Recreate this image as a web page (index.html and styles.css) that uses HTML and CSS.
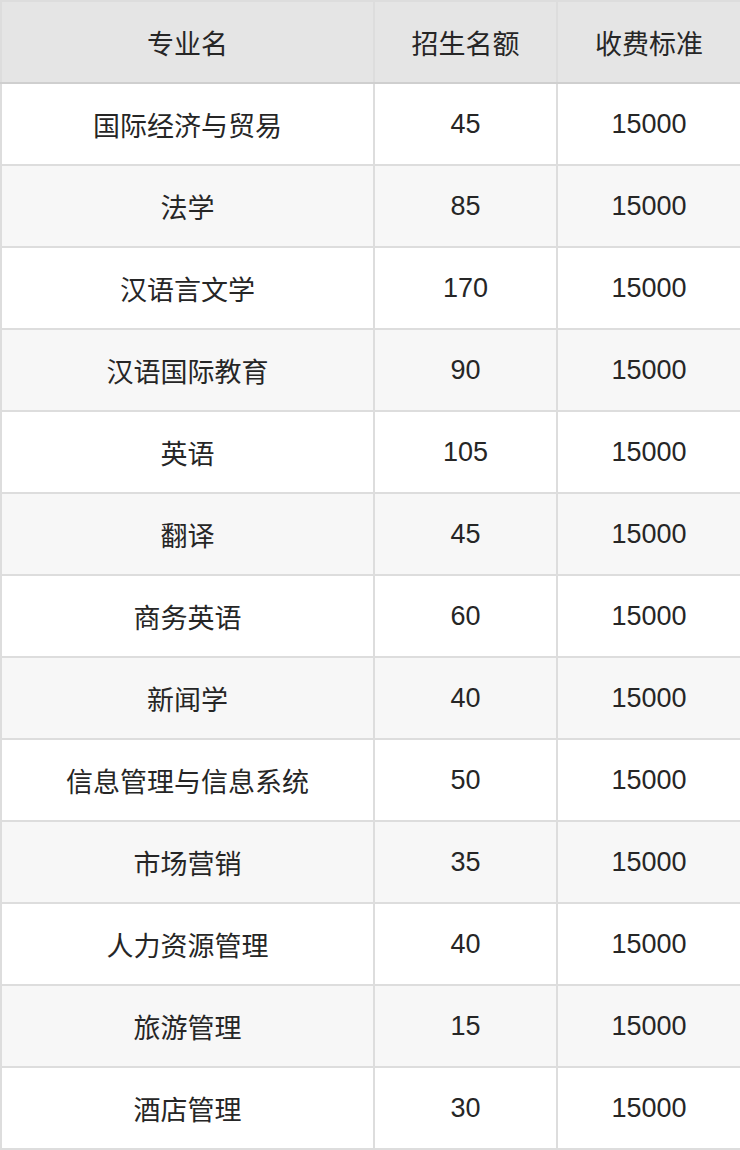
FILE: index.html
```html
<!DOCTYPE html>
<html lang="zh">
<head>
<meta charset="utf-8">
<link rel="stylesheet" href="styles.css">
</head>
<body>
<table class="grid">
  <colgroup><col class="c1"><col class="c2"><col class="c3"></colgroup>
  <thead>
    <tr><th>专业名</th><th>招生名额</th><th>收费标准</th></tr>
  </thead>
  <tbody>
    <tr><td>国际经济与贸易</td><td>45</td><td>15000</td></tr>
    <tr><td>法学</td><td>85</td><td>15000</td></tr>
    <tr><td>汉语言文学</td><td>170</td><td>15000</td></tr>
    <tr><td>汉语国际教育</td><td>90</td><td>15000</td></tr>
    <tr><td>英语</td><td>105</td><td>15000</td></tr>
    <tr><td>翻译</td><td>45</td><td>15000</td></tr>
    <tr><td>商务英语</td><td>60</td><td>15000</td></tr>
    <tr><td>新闻学</td><td>40</td><td>15000</td></tr>
    <tr><td>信息管理与信息系统</td><td>50</td><td>15000</td></tr>
    <tr><td>市场营销</td><td>35</td><td>15000</td></tr>
    <tr><td>人力资源管理</td><td>40</td><td>15000</td></tr>
    <tr><td>旅游管理</td><td>15</td><td>15000</td></tr>
    <tr><td>酒店管理</td><td>30</td><td>15000</td></tr>
  </tbody>
</table>
</body>
</html>
```

FILE: styles.css
```css
html, body {
  margin: 0;
  padding: 0;
  background: #ffffff;
}
.grid {
  width: 740px;
  border-collapse: collapse;
  table-layout: fixed;
  font-family: "Liberation Sans", "Noto Sans CJK SC", sans-serif;
  font-size: 27px;
  color: #262626;
}
.c1 { width: 373px; }
.c2 { width: 183px; }
.c3 { width: 184px; }
.grid th,
.grid td {
  border: 2px solid #dddddd;
  height: 82px;
  padding: 0;
  text-align: center;
  vertical-align: middle;
  font-weight: normal;
  box-sizing: border-box;
}
.grid th {
  background: #e5e5e5;
  border-bottom-color: #cfcfcf;
}
.grid tbody tr:nth-child(even) td {
  background: #f7f7f7;
}
```
